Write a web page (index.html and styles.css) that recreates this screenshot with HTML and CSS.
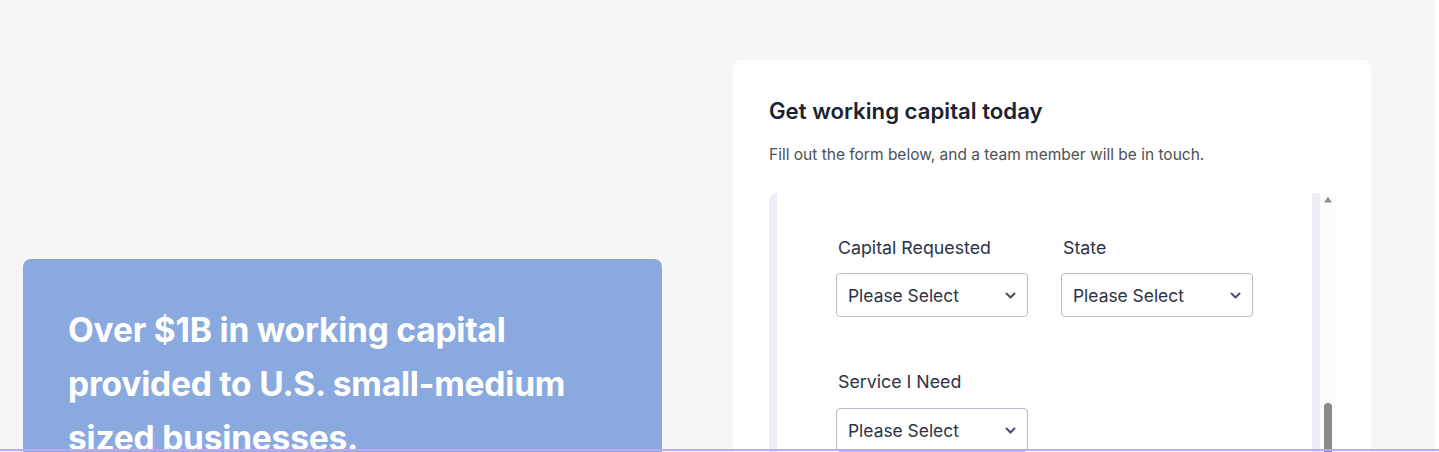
FILE: index.html
```html
<!DOCTYPE html>
<html lang="en">
<head>
<meta charset="utf-8">
<title>Working capital</title>
<link rel="stylesheet" href="styles.css">
</head>
<body>
<main class="page">
  <section class="left-col">
    <div class="stat-card">
      <p class="stat-text">Over $1B in working capital provided to U.S. small-medium sized businesses.</p>
    </div>
  </section>
  <section class="form-card">
    <h2 class="form-title">Get working capital today</h2>
    <p class="form-sub">Fill out the form below, and a team member will be in touch.</p>
    <div class="frame">
      <div class="frame-body">
        <div class="form-inner">
          <div class="row">
            <div class="field">
              <label class="label">Capital Requested</label>
              <div class="select"><span>Please Select</span><svg class="chev" width="11" height="7" viewBox="0 0 11 7"><path d="M1.5 1.5 L5.5 5.5 L9.5 1.5" fill="none" stroke="#4a5068" stroke-width="2" stroke-linecap="round" stroke-linejoin="round"/></svg></div>
            </div>
            <div class="field">
              <label class="label">State</label>
              <div class="select"><span>Please Select</span><svg class="chev" width="11" height="7" viewBox="0 0 11 7"><path d="M1.5 1.5 L5.5 5.5 L9.5 1.5" fill="none" stroke="#4a5068" stroke-width="2" stroke-linecap="round" stroke-linejoin="round"/></svg></div>
            </div>
          </div>
          <div class="row row-second">
            <div class="field">
              <label class="label">Service I Need</label>
              <div class="select"><span>Please Select</span><svg class="chev" width="11" height="7" viewBox="0 0 11 7"><path d="M1.5 1.5 L5.5 5.5 L9.5 1.5" fill="none" stroke="#4a5068" stroke-width="2" stroke-linecap="round" stroke-linejoin="round"/></svg></div>
            </div>
          </div>
        </div>
      </div>
      <div class="scrollbar">
        <svg class="arrow-up" width="12" height="9" viewBox="0 0 12 9"><path d="M6 1 L11 8 L1 8 Z" fill="#8f8f8f"/></svg>
        <div class="thumb"></div>
      </div>
    </div>
  </section>
</main>
<div class="page-scroll"></div>
<div class="bottom-line"></div>
</body>
</html>
```

FILE: styles.css
```css
* { box-sizing: border-box; }
html, body {
  margin: 0;
  padding: 0;
  height: 452px;
  overflow: hidden;
  background: #f5f6f5;
  font-family: Inter, "Noto Sans", "Liberation Sans", sans-serif;
}
.page {
  display: flex;
  align-items: flex-start;
  padding-left: 23px;
  gap: 71px;
}
.left-col {
  padding-top: 259px;
}
.stat-card {
  width: 639px;
  height: 200px;
  background: #8aaadf;
  border-radius: 8px;
  padding: 44px 45px 0;
}
.stat-text {
  margin: 0;
  color: #ffffff;
  font-weight: 700;
  font-size: 33.5px;
  line-height: 54px;
  letter-spacing: -0.2px;
}
.form-card {
  margin-top: 60px;
  width: 638px;
  height: 392px;
  background: #ffffff;
  border-radius: 8px 8px 0 0;
  padding: 37px 35px 0 36px;
}
.form-title {
  margin: 0;
  font-size: 22.2px;
  line-height: 28px;
  font-weight: 600;
  color: #1b2232;
}
.form-sub {
  margin: 20px 0 0;
  font-size: 15.5px;
  line-height: 20px;
  color: #4d5158;
}
.frame {
  margin-top: 28px;
  display: flex;
  width: 567px;
  height: 259px;
}
.frame-body {
  flex: 1;
  background: #eeeefb;
  border-radius: 8px 0 0 0;
  padding: 0 8px;
}
.form-inner {
  background: #ffffff;
  height: 100%;
  padding: 43px 59px 0;
}
.row {
  display: flex;
  gap: 33px;
}
.row-second {
  margin-top: 53px;
}
.field {
  width: 192px;
  display: flex;
  flex-direction: column;
}
.label {
  font-size: 17.8px;
  line-height: 24px;
  color: #2c3345;
  padding-left: 2px;
}
.select {
  margin-top: 13px;
  height: 44px;
  border: 1px solid #b8bbca;
  border-radius: 4px;
  display: flex;
  align-items: center;
  justify-content: space-between;
  padding: 0 11px 0 11px;
  font-size: 17.4px;
  color: #2c3345;
}
.row-second .select { margin-top: 14px; }
.chev { display: block; }
.scrollbar {
  width: 16px;
  background: #fbfbfb;
  display: flex;
  flex-direction: column;
  align-items: center;
  padding-top: 3px;
}
.arrow-up { display: block; }
.thumb {
  margin-top: 200px;
  width: 8px;
  height: 60px;
  background: #8a8a8a;
  border-radius: 4px 4px 0 0;
}
.page-scroll {
  position: fixed;
  top: 0;
  right: 0;
  width: 5px;
  height: 452px;
  background: #fdfdfd;
}
.bottom-line {
  position: fixed;
  left: 0;
  right: 0;
  bottom: 1px;
  height: 2px;
  background: #bba9f3;
}
```
